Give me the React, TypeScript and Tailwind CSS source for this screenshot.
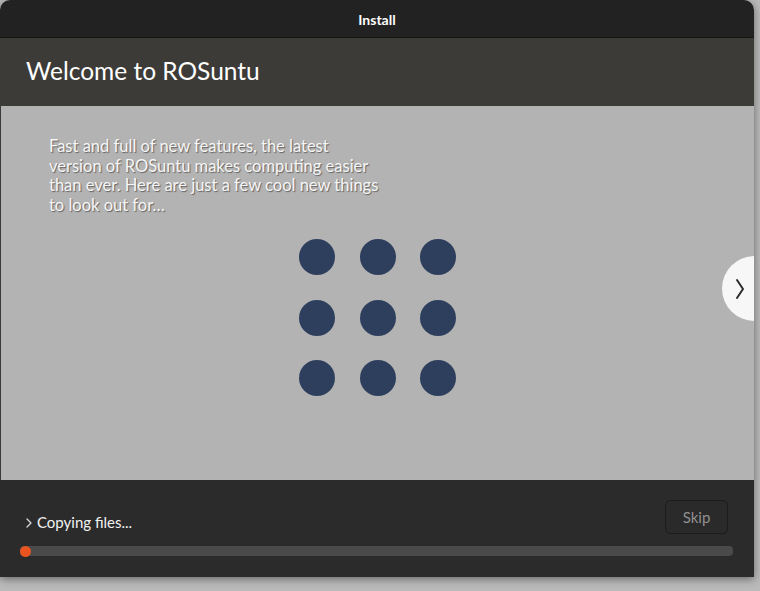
const font = { fontFamily: '"Lato", "Noto Sans", sans-serif' };

function Dot() {
  return <div className="w-[36px] h-[36px] rounded-full bg-[#2e3f5e]" />;
}

export default function App() {
  return (
    <div className="w-[760px] h-[591px] bg-[#bababa] overflow-hidden" style={font}>
      <div className="w-[754px] h-[577px] rounded-t-[10px] overflow-hidden flex flex-col shadow-[0_2px_8px_rgba(0,0,0,0.45)]">
        {/* Title bar */}
        <div className="h-[38px] bg-[#222222] border-b border-[#161616] flex items-center justify-center">
          <span className="text-white text-[14px] font-bold pt-[1px]">Install</span>
        </div>

        {/* Header */}
        <div className="h-[68px] bg-[#3c3b37] flex items-center pl-[26px]">
          <h1 className="text-white text-[24.5px] font-normal leading-none pb-[2px]">Welcome to ROSuntu</h1>
        </div>

        {/* Slide */}
        <div className="relative h-[374px] bg-[#b3b3b3] border-l border-[#3a3a3a]">
          <p className="pl-[48px] pt-[31px] text-[16.5px] leading-[19.5px] text-[#f6f6f6] whitespace-nowrap [text-shadow:1px_1px_1px_rgba(0,0,0,0.45)]">
            Fast and full of new features, the latest
            <br />
            version of ROSuntu makes computing easier
            <br />
            than ever. Here are just a few cool new things
            <br />
            to look out for…
          </p>
          <div className="ml-[298px] mt-[24px] grid grid-cols-3 gap-x-[24.5px] gap-y-[24.5px] w-fit">
            <Dot /><Dot /><Dot />
            <Dot /><Dot /><Dot />
            <Dot /><Dot /><Dot />
          </div>
          <div className="absolute right-[-33px] top-[150px] w-[65px] h-[65px] rounded-full bg-[#f7f7f7] flex items-center pl-[13px]">
            <svg width="10" height="22" viewBox="0 0 10 22" fill="none">
              <path d="M2 2 L8 11 L2 20" stroke="#2b2b2b" strokeWidth="2" strokeLinecap="round" strokeLinejoin="round" />
            </svg>
          </div>
        </div>

        {/* Footer */}
        <div className="flex-1 bg-[#2b2b2b] px-[20px] pt-[20px] flex flex-col">
          <div className="flex items-start justify-between">
            <div className="flex items-center gap-[4px] pl-[5px] pt-[11px]">
              <svg width="8" height="12" viewBox="0 0 8 12" fill="none">
                <path d="M2 3 L6 7 L2 11" stroke="#d8d8d8" strokeWidth="1.3" strokeLinecap="round" strokeLinejoin="round" />
              </svg>
              <span className="text-[#f2f2f2] text-[15px]">Copying files...</span>
            </div>
            <button className="mr-[6px] w-[63px] h-[34px] rounded-[5px] border border-[#1c1c1c] bg-[#2a2a2a] text-[#909090] text-[15px]">
              Skip
            </button>
          </div>
          <div className="mt-[12px] h-[10px] w-[713px] rounded-[4px] bg-[#4a4a4a] flex">
            <div className="w-[11px] h-[11px] -mt-[0.5px] rounded-full bg-[#e95420]" />
          </div>
        </div>
      </div>
    </div>
  );
}
